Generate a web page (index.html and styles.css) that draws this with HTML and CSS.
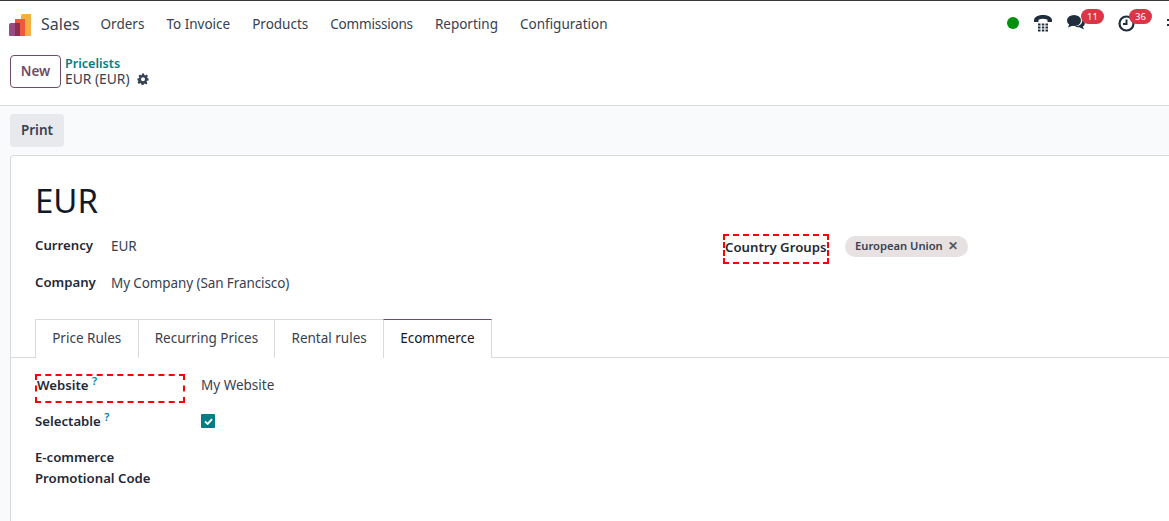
FILE: index.html
```html
<!DOCTYPE html>
<html lang="en">
<head>
<meta charset="utf-8">
<title>EUR (EUR) - Pricelists</title>
<link rel="stylesheet" href="styles.css">
</head>
<body>
<nav class="navbar">
  <svg class="logo" width="22" height="22" viewBox="0 0 22 22"><path d="M12 1.500a1.500 1.500 0 0 1 1.500-1.500H22v20.500a1.500 1.500 0 0 1-1.500 1.500H12z" fill="#f9ae3f"/><rect x="6" y="5" width="10" height="17" fill="#ef5a3c"/><path d="M0 11a2 2 0 0 1 2-2h9v13H1a1 1 0 0 1-1-1z" fill="#9b4a84"/><rect x="6" y="9" width="5" height="13" fill="#8e2c52"/></svg>
  <span class="brand">Sales</span>
  <ul class="menu">
    <li>Orders</li><li>To Invoice</li><li>Products</li><li class="tight">Commissions</li><li>Reporting</li><li>Configuration</li>
  </ul>
  <div class="systray">
    <span class="presence"></span>
    <svg class="phone" width="18" height="18" viewBox="0 0 18 18"><path d="M0 6.500C0 2.500 5 1 9 1s9 1.500 9 5.500V8h-4.500V5.800C12 5 10.500 4.700 9 4.700s-3 .3-4.500 1.100V8H0z" fill="#1f2d3d"/><g fill="#1f2d3d"><rect x="4" y="9.500" width="2.500" height="2"/><rect x="7.800" y="9.500" width="2.500" height="2"/><rect x="11.500" y="9.500" width="2.500" height="2"/><rect x="4" y="12.500" width="2.500" height="2"/><rect x="7.800" y="12.500" width="2.500" height="2"/><rect x="11.500" y="12.500" width="2.500" height="2"/><rect x="4" y="15.500" width="2.500" height="2"/><rect x="7.800" y="15.500" width="2.500" height="2"/><rect x="11.500" y="15.500" width="2.500" height="2"/></g></svg>
    <span class="tray-item chat">
      <svg width="18" height="15" viewBox="0 0 18 15"><ellipse cx="7" cy="5.500" rx="7" ry="5.500" fill="#1f2d3d"/><path d="M2.500 9l-1.500 3.500 5-2z" fill="#1f2d3d"/><path d="M15 5c1.800 1 3 2.500 2.800 4-.2 1.200-1 2-2 2.600l1.200 3-4.500-2.300c-2 .2-3.600-.2-4.800-1.100 4.500.2 8.300-2.500 7.300-6.200z" fill="#1f2d3d"/></svg>
      <span class="badge badge-chat">11</span>
    </span>
    <span class="tray-item clock">
      <svg width="17" height="17" viewBox="0 0 17 17"><circle cx="8.500" cy="8.500" r="7" fill="none" stroke="#1f2d3d" stroke-width="2.200"/><path d="M8.500 4.500v4.500H5" fill="none" stroke="#1f2d3d" stroke-width="2"/></svg>
      <span class="badge badge-clock">36</span>
    </span>
    <svg class="apps" width="3" height="14" viewBox="0 0 3 14"><g fill="#1f2d3d"><rect x="1" y="2" width="2" height="2"/><rect x="1" y="7" width="2" height="2"/></g></svg>
  </div>
</nav>

<header class="control">
  <button class="btn-new">New</button>
  <div class="crumbs">
    <a class="crumb-link">Pricelists</a>
    <div class="crumb-current">EUR (EUR)
      <svg class="gear" width="12" height="12" viewBox="0 0 24 24"><path fill="#374151" fill-rule="evenodd" d="M10 1h4l.6 3.200 1.900.8 2.700-1.800 2.800 2.800-1.800 2.700.8 1.900L23.200 11v4l-3.200.6-.8 1.900 1.800 2.700-2.800 2.800-2.700-1.800-1.900.8-.6 2.200h-4l-.6-3.200-1.900-.8-2.700 1.800-2.800-2.800 1.800-2.700-.8-1.900L.8 15v-4l3.200-.6.800-1.900L3 5.800 5.800 3l2.700 1.800 1-.6zM12 8.500a4 4 0 1 0 0 8 4 4 0 0 0 0-8z"/></svg>
    </div>
  </div>
</header>

<main class="content">
  <div class="actions"><button class="btn-print">Print</button></div>
  <section class="sheet">
    <h1 class="title">EUR</h1>
    <div class="group">
      <div class="col-left">
        <div class="field"><label class="lbl lbl-main">Currency</label><span class="val">EUR</span></div>
        <div class="field"><label class="lbl lbl-main">Company</label><span class="val">My Company (San Francisco)</span></div>
      </div>
      <div class="col-right">
        <label class="lbl boxed boxed-country">Country Groups</label>
        <span class="tag">European Union <span class="tag-x">✕</span></span>
      </div>
    </div>
    <div class="tabs">
      <span class="tab">Price Rules</span><span class="tab">Recurring Prices</span><span class="tab">Rental rules</span><span class="tab active">Ecommerce</span>
    </div>
    <div class="pane">
      <div class="row row-web"><label class="lbl boxed boxed-web">Website <sup class="help">?</sup></label><span class="val">My Website</span></div>
      <div class="row row-sel"><label class="lbl">Selectable <sup class="help">?</sup></label>
        <span class="check"><svg width="9" height="7" viewBox="0 0 10 8"><path d="M1 4l3 2.800L9 1.200" fill="none" stroke="#fff" stroke-width="2.200"/></svg></span>
      </div>
      <div class="row row-promo"><label class="lbl">E-commerce<br>Promotional Code</label></div>
    </div>
  </section>
</main>
</body>
</html>
```
FILE: styles.css
```css
* { box-sizing: border-box; }
html, body { margin: 0; height: 100%; overflow: hidden; }
body { width: 1169px; height: 521px; font-family: "Noto Sans", sans-serif; font-size: 13.500px; color: #374151; background: #fff; display: flex; flex-direction: column; }

.navbar { height: 46px; flex: none; border-top: 1px solid #3a3a3a; display: flex; align-items: center; padding-left: 9px; }
.logo { flex: none; margin-top: 3px; }
.brand { font-size: 16px; margin-left: 10px; margin-top: 1px; }
.menu { list-style: none; display: flex; margin: 1px 0 0 21px; padding: 0; gap: 22px; font-size: 13.500px; }
.tight { letter-spacing: -.2px; }
.systray { margin-left: auto; display: flex; align-items: center; height: 100%; }
.presence { width: 12px; height: 12px; border-radius: 50%; background: #008f0f; margin-right: 15px; margin-top: -2px; }
.phone { margin-right: 15px; margin-top: -2px; }
.tray-item { position: relative; display: block; }
.tray-item svg { display: block; }
.chat { width: 18px; height: 15px; margin-right: 33px; margin-top: -2px; }
.clock { width: 17px; height: 17px; margin-right: 31px; }
.badge { position: absolute; height: 15px; min-width: 23px; border-radius: 8px; background: #dc3545; color: #fff; font-size: 9.500px; line-height: 15px; text-align: center; }
.badge-chat { top: -6px; left: 14px; }
.badge-clock { top: -6px; left: 11px; }
.apps { flex: none; }

.control { height: 60px; flex: none; background: #fff; border-bottom: 1px solid #d8dadd; display: flex; align-items: flex-start; padding: 9px 0 0 10px; }
.btn-new { width: 51px; height: 33px; background: #fff; border: 1px solid #714b67; border-radius: 4px; color: #714b67; font: 600 13.500px "Noto Sans", sans-serif; padding: 0 0 2px; }
.crumbs { margin-left: 4px; padding-top: 1px; }
.crumb-link { display: block; color: #017e84; font-weight: 600; font-size: 12.600px; line-height: 15px; }
.crumb-current { font-size: 13.800px; line-height: 16px; display: flex; align-items: center; gap: 7px; white-space: nowrap; }

.content { flex: 1; background: #f9fafb; padding: 8px 0 0 10px; min-height: 0; display: flex; flex-direction: column; overflow: hidden; }
.actions { height: 33px; margin-bottom: 8px; flex: none; }
.btn-print { width: 54px; height: 33px; border: 0; border-radius: 4px; background: #e7e9ed; color: #374151; font: 600 13.500px "Noto Sans", sans-serif; padding: 0 0 2px; }
.sheet { flex: 1; min-height: 0; background: #fff; border: 1px solid #d8dadd; border-width: 1px 0 0 1px; border-radius: 4px 0 0 0; padding: 23px 0 0 0; }
.title { font-size: 33px; font-weight: 400; line-height: 44px; margin: 0 0 0 24px; color: #111827; }
.group { display: flex; margin: 13px 0 0 24px; }
.col-left { width: 688px; flex: none; }
.field { display: flex; height: 37px; }
.lbl { font-weight: 600; font-size: 13.200px; color: #1f2937; white-space: nowrap; }
.lbl-main { width: 76px; flex: none; }
.val { line-height: 22px; }
.field .lbl { line-height: 18px; }
.field .val { line-height: 21px; letter-spacing: -.1px; }
.col-right { display: flex; align-items: flex-start; }
.boxed { border: 2px dashed #f00; }
.boxed-country { height: 30px; width: 106px; line-height: 22px; margin-top: -2px; }
.tag { margin-left: 16px; height: 21px; padding: 0 10px; border-radius: 11px; background: #e7e1e1; font-size: 11.200px; font-weight: 600; line-height: 20px; color: #374151; display: inline-flex; gap: 5px; white-space: nowrap; }
.tag-x { font-size: 12px; font-weight: 700; color: #555; }
.tabs { display: flex; margin-top: 9px; padding-left: 24px; border-bottom: 1px solid #d8dadd; height: 39px; }
.tab { height: 39px; padding: 0 16.200px; line-height: 37px; border: 1px solid #d8dadd; border-right: 0; border-bottom: 0; background: #fff; white-space: nowrap; }
.tab.active { border-right: 1px solid #d8dadd; border-top-color: #714b67; color: #111827; position: relative; z-index: 1; }
.pane { padding: 16px 0 0 24px; }
.row { display: flex; }
.row-web { height: 29px; align-items: flex-start; }
.boxed-web { width: 150px; height: 29px; line-height: 19px; margin-right: 16px; display: block; }
.row-sel { margin-top: 8px; height: 27px; }
.row-sel .lbl { width: 166px; line-height: 20px; }
.help { color: #0180a5; font-size: 11px; font-weight: 600; line-height: 0; }
.check { width: 14px; height: 14px; background: #017e84; border-radius: 1px; display: flex; align-items: center; justify-content: center; margin-top: 3px; }
.row-promo { margin-top: 9px; }
.row-promo .lbl { line-height: 21px; }
```
